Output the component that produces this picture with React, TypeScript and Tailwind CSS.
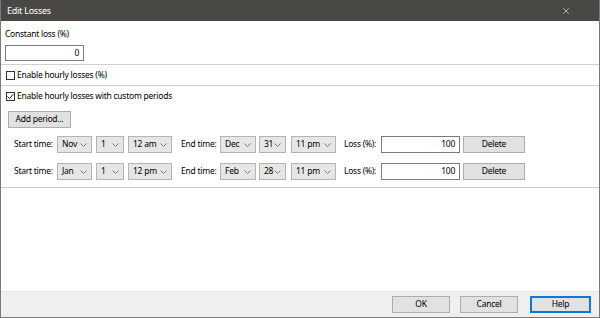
import { X } from 'lucide-react';

const ROWS = [
  { month: 'Nov', day: '1', hour: '12 am', endMonth: 'Dec', endDay: '31', endHour: '11 pm', loss: '100' },
  { month: 'Jan', day: '1', hour: '12 pm', endMonth: 'Feb', endDay: '28', endHour: '11 pm', loss: '100' },
];

function Chevron() {
  return (
    <svg width="7" height="4" viewBox="0 0 7 4" className="shrink-0">
      <path d="M0.5 0.5 L3.5 3.5 L6.5 0.5" fill="none" stroke="#7a7a7a" strokeWidth="1" />
    </svg>
  );
}

function Select({ value, w }: { value: string; w: string }) {
  return (
    <div className={`flex h-[17px] shrink-0 ${w} items-center justify-between border border-[#b4b4b4] bg-[#e6e6e6] pl-[4px] pr-[4px]`}>
      <span>{value}</span>
      <Chevron />
    </div>
  );
}

function Button({ label, w, primary }: { label: string; w: string; primary?: boolean }) {
  return (
    <div
      className={`flex h-[17px] shrink-0 ${w} items-center justify-center bg-[#e1e1e1] ${
        primary ? 'border-2 border-[#0f78d7]' : 'border border-[#adadad]'
      }`}
    >
      {label}
    </div>
  );
}

function Checkbox({ checked }: { checked?: boolean }) {
  return (
    <div className="flex h-[9px] w-[9px] shrink-0 items-center justify-center border border-[#333333] bg-white">
      {checked && (
        <svg width="7" height="7" viewBox="0 0 7 7">
          <path d="M0.5 3.5 L2.5 5.5 L6.5 1" fill="none" stroke="#222" strokeWidth="1" />
        </svg>
      )}
    </div>
  );
}

export default function App() {
  return (
    <div
      className="flex h-[318px] w-[600px] flex-col whitespace-nowrap border-x border-b border-[#7a7a7a] bg-white text-[8.5px] tracking-[-0.25px] text-black"
      style={{ fontFamily: '"Noto Sans", sans-serif' }}
    >
      {/* title bar */}
      <div className="flex h-[21px] shrink-0 items-center justify-between bg-[#4a4845] pl-[6px] pr-[28px] text-[9px] text-white">
        <span>Edit Losses</span>
        <X size={10} strokeWidth={1.5} className="text-[#e8e8e8]" />
      </div>

      {/* constant loss */}
      <div className="border-b border-[#d0d0d0] px-[4px] pb-[3px] pt-[6px]">
        <div className="leading-[13px]">Constant loss (%)</div>
        <div className="mt-[5px] flex h-[16px] w-[79px] items-center justify-end border border-[#7a7a7a] pr-[4px]">
          0
        </div>
      </div>

      <div className="flex h-[21px] items-center gap-[2px] border-b border-[#d0d0d0] px-[5px]">
        <Checkbox />
        <span>Enable hourly losses (%)</span>
      </div>

      {/* custom periods */}
      <div className="border-b border-[#c8c8c8] pb-[7px]">
        <div className="flex h-[20px] items-center gap-[2px] px-[5px]">
          <Checkbox checked />
          <span>Enable hourly losses with custom periods</span>
        </div>
        <div className="ml-[7px] mt-[5px]">
          <Button label="Add period..." w="w-[63px]" />
        </div>
        <div className="mt-[8px] flex flex-col gap-[10px] pl-[13px]">
          {ROWS.map((r) => (
            <div key={r.month} className="flex items-center">
              <span className="w-[43px] shrink-0">Start time:</span>
              <Select value={r.month} w="w-[35px]" />
              <div className="w-[4px] shrink-0" />
              <Select value={r.day} w="w-[28px]" />
              <div className="w-[4px] shrink-0" />
              <Select value={r.hour} w="w-[44px]" />
              <span className="ml-[9px] w-[39px] shrink-0">End time:</span>
              <Select value={r.endMonth} w="w-[36px]" />
              <div className="w-[3px] shrink-0" />
              <Select value={r.endDay} w="w-[27px]" />
              <div className="w-[5px] shrink-0" />
              <Select value={r.endHour} w="w-[45px]" />
              <span className="ml-[8px] w-[37px] shrink-0">Loss (%):</span>
              <div className="flex h-[17px] w-[79px] shrink-0 items-center justify-end border border-[#7a7a7a] pr-[4px]">
                {r.loss}
              </div>
              <div className="w-[3px] shrink-0" />
              <Button label="Delete" w="w-[62px]" />
            </div>
          ))}
        </div>
      </div>

      <div className="flex-1" />

      {/* footer */}
      <div className="flex h-[26px] shrink-0 items-center justify-end border-t border-[#e6e6e6] bg-[#efefef] pr-[8px]">
        <Button label="OK" w="w-[58px]" />
        <div className="w-[10px]" />
        <Button label="Cancel" w="w-[58px]" />
        <div className="w-[12px]" />
        <Button label="Help" w="w-[61px]" primary />
      </div>
    </div>
  );
}
